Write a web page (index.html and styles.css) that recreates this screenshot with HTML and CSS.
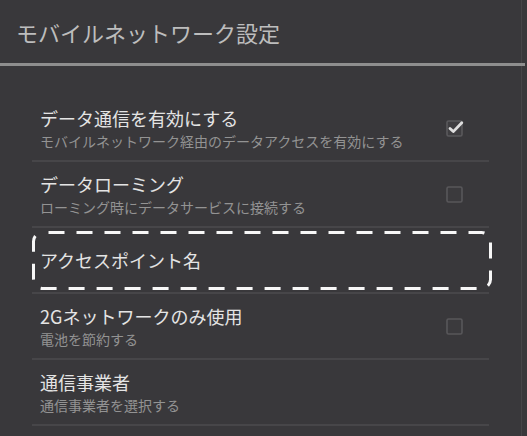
FILE: index.html
```html
<!DOCTYPE html>
<html lang="ja">
<head>
<meta charset="utf-8">
<title>モバイルネットワーク設定</title>
<link rel="stylesheet" href="styles.css">
</head>
<body>
<div class="screen">
  <header class="header">モバイルネットワーク設定</header>
  <div class="header-rule"></div>
  <ul class="list">
    <li class="row">
      <div class="text">
        <div class="title">データ通信を有効にする</div>
        <div class="summary">モバイルネットワーク経由のデータアクセスを有効にする</div>
      </div>
      <svg class="check" width="20" height="20" viewBox="0 0 20 20">
        <rect x="2" y="3" width="15" height="15" rx="1.5" fill="#3f3e41" stroke="#5a595c" stroke-width="1.6"/>
        <path d="M5 10.5 L8.3 13.6 L16.8 4.8" fill="none" stroke="#dedede" stroke-width="2.8" stroke-linecap="round" stroke-linejoin="round"/>
      </svg>
    </li>
    <li class="row">
      <div class="text">
        <div class="title">データローミング</div>
        <div class="summary">ローミング時にデータサービスに接続する</div>
      </div>
      <svg class="check" width="20" height="20" viewBox="0 0 20 20">
        <rect x="2" y="3" width="15" height="15" rx="1.5" fill="#3b3a3d" stroke="#58575a" stroke-width="1.6"/>
      </svg>
    </li>
    <li class="row row-marked">
      <div class="text">
        <div class="title">アクセスポイント名</div>
      </div>
      <svg class="marker" width="461" height="60" viewBox="0 0 461 60">
        <rect x="1.5" y="1.5" width="457" height="56" rx="9" fill="none" stroke="#f7f7f7" stroke-width="3" stroke-dasharray="16 12" stroke-dashoffset="-6"/>
      </svg>
    </li>
    <li class="row">
      <div class="text">
        <div class="title">2Gネットワークのみ使用</div>
        <div class="summary">電池を節約する</div>
      </div>
      <svg class="check" width="20" height="20" viewBox="0 0 20 20">
        <rect x="2" y="3" width="15" height="15" rx="1.5" fill="#3b3a3d" stroke="#58575a" stroke-width="1.6"/>
      </svg>
    </li>
    <li class="row">
      <div class="text">
        <div class="title">通信事業者</div>
        <div class="summary">通信事業者を選択する</div>
      </div>
    </li>
  </ul>
</div>
</body>
</html>
```

FILE: styles.css
```css
html, body {
  margin: 0;
  padding: 0;
  background: #39383b;
}
body {
  width: 527px;
  height: 436px;
  overflow: hidden;
  font-family: "Noto Sans CJK JP", "Noto Sans", sans-serif;
}
.screen {
  width: 521px;
  height: 436px;
  border-right: 1px solid #464548;
  background: #39383b;
}
.header {
  height: 63px;
  box-sizing: border-box;
  padding-left: 16px;
  display: flex;
  align-items: center;
  font-size: 22px;
  color: #bdbdbd;
}
.header-rule {
  height: 3px;
  width: 525px;
  background: #8e8e8e;
}
.list {
  list-style: none;
  margin: 0;
  padding: 30px 0 0 0;
}
.row {
  position: relative;
  margin: 0 32px 0 32px;
  height: 66px;
  box-sizing: border-box;
  border-bottom: 2px solid #474649;
  display: flex;
  align-items: center;
  padding: 0 24px 0 8px;
}
.text {
  flex: 1;
  display: flex;
  flex-direction: column;
}
.title {
  font-size: 18px;
  line-height: 26px;
  color: #e4e4e4;
}
.summary {
  font-size: 14px;
  line-height: 21px;
  color: #939393;
  white-space: nowrap;
}
.check {
  display: block;
  flex: none;
}
.marker {
  position: absolute;
  left: 0;
  top: 3px;
}
```
